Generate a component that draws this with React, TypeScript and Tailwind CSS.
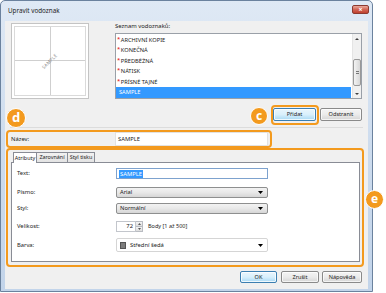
import React from "react";

const Arrow = () => (
  <svg width="5" height="3" viewBox="0 0 5 3" className="block">
    <path d="M0 0 H5 L2.5 3 Z" fill="#000" />
  </svg>
);

const Btn = ({ w, label, def }: { w: string; label: string; def?: boolean }) => (
  <div
    className={
      "h-full flex items-center justify-center rounded-[2px] border text-[5.6px] text-[#222] " +
      w +
      (def
        ? " border-[#3c7fb1] bg-gradient-to-b from-[#eaf6fd] via-[#d9f0fc] to-[#a7d9f5] shadow-[inset_0_0_0_1px_rgba(255,255,255,0.8)]"
        : " border-[#8a8a8a] bg-gradient-to-b from-[#f4f4f4] via-[#ebebeb] to-[#d5d5d5] shadow-[inset_0_0_0_1px_rgba(255,255,255,0.7)]")
    }
  >
    {label}
  </div>
);

const Combo = ({ text }: { text: string }) => (
  <div className="w-[152px] h-[11px] flex items-center justify-between rounded-[2px] border border-[#8e8f8f] bg-gradient-to-b from-[#f3f3f3] via-[#e8e8e8] to-[#d6d6d6] pl-[3px] pr-[4px] text-[5.8px]">
    <span>{text}</span>
    <Arrow />
  </div>
);

const items = ["ARCHIVNÍ KOPIE", "KONEČNÁ", "PŘEDBĚŽNÁ", "NÁTISK", "PŘÍSNĚ TAJNÉ"];

export default function App() {
  return (
    <div
      className="relative w-[386px] h-[293px] bg-white overflow-hidden text-[#222]"
      style={{ fontFamily: '"Noto Sans", "Liberation Sans", sans-serif' }}
    >
      {/* Window */}
      <div className="w-[373px] h-[292px] flex flex-col border border-[#6b829e] rounded-t-[5px] bg-gradient-to-b from-[#dfe9f5] via-[#cddcee] to-[#c2d4ea] px-[4px] pb-[2px]">
        {/* Title bar */}
        <div className="h-[20px] flex items-start justify-between">
          <span className="mt-[5px] ml-[3px] text-[6.3px] leading-[9px] text-[#1e1e1e]">Upravit vodoznak</span>
          <div className="mt-[4px] mr-[-1px] w-[17px] h-[9px] rounded-[2px] border border-[#8c3a30] bg-gradient-to-b from-[#e9a99c] via-[#d26656] to-[#c0402e] flex items-center justify-center text-white text-[7px] leading-none font-bold">
            ×
          </div>
        </div>

        {/* Client */}
        <div className="flex-1 bg-[#f0f0f0] flex flex-col">
          {/* Top section */}
          <div className="flex">
            <div className="ml-[6px] mt-[2px] w-[78px] h-[76px] bg-white border border-[#c4c4c4] p-[2px]">
              <div className="relative w-full h-full border border-[#dadada] flex flex-col">
                <div className="flex-1 flex">
                  <div className="flex-1 border-r border-b border-[#cfcfcf]" />
                  <div className="flex-1 border-b border-[#cfcfcf]" />
                </div>
                <div className="flex-1 flex">
                  <div className="flex-1 border-r border-[#cfcfcf]" />
                  <div className="flex-1" />
                </div>
                <div className="absolute inset-0 flex items-center justify-center">
                  <span className="-rotate-45 text-[4.6px] text-[#8a8a8a] tracking-[0.3px]">SAMPLE</span>
                </div>
              </div>
            </div>
            <div className="ml-[26px] w-[247px] flex flex-col">
              <div className="h-[10px] text-[5.9px] leading-[10px] text-[#1a1a1a]">Seznam vodoznaků:</div>
              <div className="mt-[2px] h-[66px] bg-white border border-[#9aa0a8] flex">
                <div className="flex-1 pt-[0.5px] flex flex-col">
                  {items.map((t) => (
                    <div key={t} className="h-[10.6px] flex items-center pl-[1px] text-[5.7px]">
                      <span className="text-[#e00000] text-[6px] leading-none self-start mt-[1px]">*</span>
                      <span className="ml-[0.5px]">{t}</span>
                    </div>
                  ))}
                  <div className="h-[10.6px] flex items-center pl-[3px] text-[5.7px] text-white bg-[#3399ff] mr-[1px]">
                    SAMPLE
                  </div>
                </div>
                <div className="w-[9px] bg-[#f0f0f0] border-l border-[#e4e4e4] flex flex-col items-center">
                  <div className="h-[9px] flex items-center justify-center">
                    <svg width="4" height="2" viewBox="0 0 4 2"><path d="M0 2 L2 0 L4 2 Z" fill="#404040" /></svg>
                  </div>
                  <div className="h-[16px]" />
                  <div className="w-[8px] h-[27px] rounded-[2px] border border-[#999] bg-gradient-to-r from-[#f3f3f3] to-[#d8d8d8] flex items-center justify-center">
                    <div className="w-[3px] h-[3px] border-y border-[#777]" />
                  </div>
                  <div className="flex-1" />
                  <div className="h-[9px] flex items-center justify-center">
                    <svg width="4" height="2" viewBox="0 0 4 2"><path d="M0 0 L4 0 L2 2 Z" fill="#404040" /></svg>
                  </div>
                </div>
              </div>
            </div>
          </div>

          {/* Add / Remove buttons */}
          <div className="mt-[9px] h-[13px] flex justify-end gap-[4px] pr-[6px]">
            <Btn w="w-[43px]" label="Přidat" def />
            <Btn w="w-[42px]" label="Odstranit" />
          </div>

          {/* separator */}
          <div className="mt-[6px] h-[1px] mx-[5px] bg-[#dcdcdc]" />

          {/* Name row */}
          <div className="mt-[4px] h-[14px] flex items-center">
            <span className="pl-[6px] w-[110px] text-[5.8px] text-[#1a1a1a]">Název:</span>
            <div className="w-[153px] h-[14px] bg-white border border-[#e2e2e2] flex items-center pl-[2px] text-[5.8px]">
              SAMPLE
            </div>
          </div>

          {/* Tab control */}
          <div className="mt-[5px] ml-[6px] w-[349px] flex flex-col">
            <div className="h-[11px] flex items-end pl-[2px]">
              <div className="h-[11px] w-[24px] bg-white border border-b-0 border-[#898c95] flex items-center justify-center text-[5.4px] relative top-[1px] z-10">
                Atributy
              </div>
              <div className="h-[10px] w-[31px] bg-gradient-to-b from-[#f2f2f2] to-[#e3e3e3] border border-l-0 border-b-0 border-[#898c95] flex items-center justify-center text-[5.4px]">
                Zarovnání
              </div>
              <div className="h-[10px] w-[27px] bg-gradient-to-b from-[#f2f2f2] to-[#e3e3e3] border border-l-0 border-b-0 border-[#898c95] flex items-center justify-center text-[5.4px]">
                Styl tisku
              </div>
            </div>
            <div className="h-[100px] bg-white border border-[#898c95] flex flex-col pl-[5px] text-[5.8px]">
              <div className="mt-[5px] flex items-center h-[11px]">
                <span className="w-[99px]">Text:</span>
                <div className="w-[152px] h-[11px] border border-[#7da2ce] bg-white flex items-center pl-[2px]">
                  <span className="bg-[#3399ff] text-white px-[1px] leading-[8px]">SAMPLE</span>
                </div>
              </div>
              <div className="mt-[8px] flex items-center h-[11px]">
                <span className="w-[99px]">Písmo:</span>
                <Combo text="Arial" />
              </div>
              <div className="mt-[5px] flex items-center h-[11px]">
                <span className="w-[99px]">Styl:</span>
                <Combo text="Normální" />
              </div>
              <div className="mt-[7px] flex items-center h-[11px]">
                <span className="w-[99px]">Velikost:</span>
                <div className="w-[20px] h-[11px] border border-[#c3c6cc] bg-white flex items-center justify-end pr-[2px]">72</div>
                <div className="w-[7px] h-[11px] flex flex-col">
                  <div className="flex-1 border border-l-0 border-[#b9bcc2] bg-gradient-to-b from-[#f4f4f4] to-[#dedede] flex items-center justify-center">
                    <svg width="3" height="2" viewBox="0 0 3 2"><path d="M0 2 L1.5 0 L3 2 Z" fill="#555" /></svg>
                  </div>
                  <div className="flex-1 border border-l-0 border-t-0 border-[#b9bcc2] bg-gradient-to-b from-[#f4f4f4] to-[#dedede] flex items-center justify-center">
                    <svg width="3" height="2" viewBox="0 0 3 2"><path d="M0 0 L3 0 L1.5 2 Z" fill="#555" /></svg>
                  </div>
                </div>
                <span className="ml-[5px] text-[5.5px]">Body [1 až 500]</span>
              </div>
              <div className="mt-[6px] flex items-center h-[14px]">
                <span className="w-[99px]">Barva:</span>
                <div className="w-[152px] h-[14px] border border-[#d5d5d5] rounded-[2px] bg-white flex items-center pl-[3px] pr-[4px]">
                  <div className="w-[6px] h-[7px] bg-[#7d7d7d] border border-[#555]" />
                  <span className="ml-[4px] flex-1">Střední šedá</span>
                  <Arrow />
                </div>
              </div>
            </div>
          </div>

          {/* Bottom buttons */}
          <div className="mt-[9px] h-[12px] flex justify-end pr-[6px]">
            <Btn w="w-[37px]" label="OK" def />
            <div className="w-[4px]" />
            <Btn w="w-[38px]" label="Zrušit" />
            <div className="w-[3px]" />
            <Btn w="w-[40px]" label="Nápověda" />
          </div>
        </div>
      </div>

      {/* Annotations */}
      <div className="absolute left-[271px] top-[105px] w-[48px] h-[20px] rounded-[4px] border-2 border-[#f39a1e]" />
      <div className="absolute left-[6px] top-[130px] w-[266px] h-[18px] rounded-[4px] border-2 border-[#f39a1e]" />
      <div className="absolute left-[6px] top-[148px] w-[358px] h-[119px] rounded-[4px] border-2 border-[#f39a1e]" />

      <div className="absolute left-[250px] top-[107px] w-[18px] h-[18px] rounded-full bg-[#f39a1e] border border-white flex items-center justify-center text-white font-bold text-[12px] leading-none pb-[1px]">
        c
      </div>
      <div className="absolute left-[6px] top-[108px] w-[20px] h-[20px] rounded-full bg-[#f39a1e] border border-white flex items-center justify-center text-white font-bold text-[13px] leading-none pb-[1px]">
        d
      </div>
      <div className="absolute left-[365px] top-[190px] w-[19px] h-[19px] rounded-full bg-[#f39a1e] border border-white flex items-center justify-center text-white font-bold text-[12px] leading-none pb-[1px]">
        e
      </div>
    </div>
  );
}
